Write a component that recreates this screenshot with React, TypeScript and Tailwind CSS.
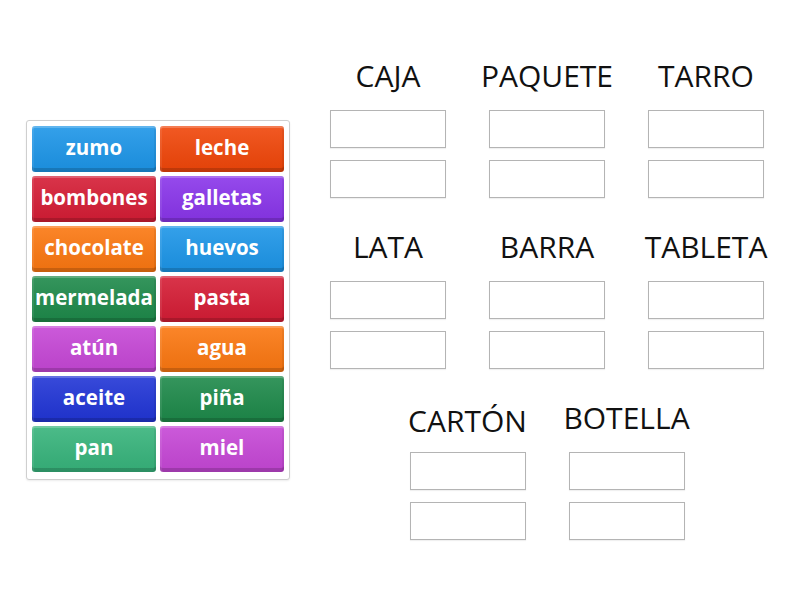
import React from "react";

type Tile = { label: string; color: string };

const tiles: Tile[] = [
  { label: "zumo", color: "bg-[#1e96e8]" },
  { label: "leche", color: "bg-[#f0470b]" },
  { label: "bombones", color: "bg-[#d51e36]" },
  { label: "galletas", color: "bg-[#8a36ea]" },
  { label: "chocolate", color: "bg-[#fb7812]" },
  { label: "huevos", color: "bg-[#1e96e8]" },
  { label: "mermelada", color: "bg-[#1f8a4b]" },
  { label: "pasta", color: "bg-[#d51e36]" },
  { label: "atún", color: "bg-[#c648d6]" },
  { label: "agua", color: "bg-[#fb7812]" },
  { label: "aceite", color: "bg-[#2236d6]" },
  { label: "piña", color: "bg-[#1f8a4b]" },
  { label: "pan", color: "bg-[#38b47c]" },
  { label: "miel", color: "bg-[#c648d6]" },
];

const rows: string[][] = [
  ["CAJA", "PAQUETE", "TARRO"],
  ["LATA", "BARRA", "TABLETA"],
  ["CARTÓN", "BOTELLA"],
];

function Group({ title }: { title: string }) {
  const shifted = title === "CARTÓN";
  return (
    <div className="flex w-[116px] flex-col items-center">
      <div
        className={`h-[40px] whitespace-nowrap text-[30px] leading-[40px] text-[#111] ${
          shifted ? "translate-y-[3px]" : ""
        }`}
      >
        {title}
      </div>
      <div className="mt-[14px] flex w-full flex-col gap-[12px]">
        <div className="h-[38px] w-full border border-[#b4b4b4] bg-white shadow-[0_1px_1px_rgba(0,0,0,0.06)]" />
        <div className="h-[38px] w-full border border-[#b4b4b4] bg-white shadow-[0_1px_1px_rgba(0,0,0,0.06)]" />
      </div>
    </div>
  );
}

export default function App() {
  return (
    <div
      className="flex h-[600px] w-[800px] bg-white"
      style={{ fontFamily: '"Open Sans", sans-serif' }}
    >
      <div className="ml-[26px] mt-[120px] h-[360px] w-[264px] rounded-[3px] border border-[#cfcfcf] bg-white p-[5px] shadow-[0_1px_2px_rgba(0,0,0,0.08)]">
        <div className="grid grid-cols-2 gap-[4px]">
          {tiles.map((t) => (
            <div
              key={t.label}
              className={`${t.color} flex h-[46px] items-center justify-center rounded-[3px] bg-gradient-to-b from-white/10 to-black/5 text-[20.5px] font-bold text-white shadow-[inset_0_2px_0_rgba(255,255,255,0.22),inset_2px_0_0_rgba(255,255,255,0.08),inset_-2px_0_0_rgba(0,0,0,0.06),inset_0_-4px_0_rgba(0,0,0,0.16)]`}
            >
              <span className="-mt-[3px] whitespace-nowrap">{t.label}</span>
            </div>
          ))}
        </div>
      </div>
      <div className="ml-[40px] mt-[56px] flex w-[434px] flex-col gap-[29px]">
        {rows.map((r, i) => (
          <div key={i} className="flex justify-center gap-[43px]">
            {r.map((g) => (
              <Group key={g} title={g} />
            ))}
          </div>
        ))}
      </div>
    </div>
  );
}
